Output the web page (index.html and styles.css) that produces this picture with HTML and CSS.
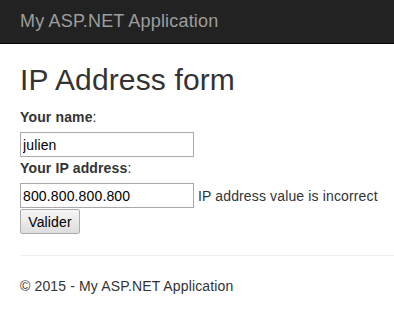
FILE: index.html
```html
<!DOCTYPE html>
<html>
<head>
<meta charset="utf-8">
<title>IP Address form</title>
<link rel="stylesheet" href="styles.css">
</head>
<body>
<div class="navbar">
  <span class="brand">My ASP.NET Application</span>
</div>
<div class="container">
  <h1 class="title">IP Address form</h1>
  <form class="form">
    <div class="label-row"><span class="label">Your name</span>:</div>
    <input class="field" type="text" value="julien">
    <div class="label-row second"><span class="label">Your IP address</span>:</div>
    <div class="field-row">
      <input class="field" type="text" value="800.800.800.800">
      <span class="error">IP address value is incorrect</span>
    </div>
    <button class="btn" type="button">Valider</button>
  </form>
  <hr class="rule">
  <footer class="footer">© 2015 - My ASP.NET Application</footer>
</div>
</body>
</html>
```

FILE: styles.css
```css
html, body {
  margin: 0;
  padding: 0;
  background: #fff;
}
body {
  font-family: "Liberation Sans", Arial, sans-serif;
  font-size: 14px;
  line-height: 20px;
  letter-spacing: 0.14px;
  color: #333;
}
.navbar {
  height: 43px;
  background: #222;
  border-bottom: 1px solid #080808;
  display: flex;
  align-items: center;
  padding-left: 20px;
}
.brand {
  font-size: 18px;
  line-height: 20px;
  letter-spacing: 0.18px;
  color: #9d9d9d;
  margin-top: -2px;
}
.container {
  padding-left: 20px;
}
.title {
  font-size: 30px;
  font-weight: 500;
  line-height: 33px;
  letter-spacing: 0.14px;
  margin: 19px 0 11px;
  color: #333;
}
.form {
  display: flex;
  flex-direction: column;
  align-items: flex-start;
}
.label-row {
  margin-bottom: 5px;
}
.label-row.second {
  margin-top: 1px;
}
.label {
  font-weight: bold;
}
.field {
  box-sizing: border-box;
  width: 174px;
  height: 25px;
  margin: 0;
  padding: 1px 2px;
  border: 1px solid #a9a9a9;
  font-family: "Liberation Sans", Arial, sans-serif;
  font-size: 14px;
  letter-spacing: 0.14px;
  color: #000;
  background: #fff;
}
.field-row {
  display: flex;
  align-items: center;
  gap: 4px;
}
.error {
  color: #333;
}
.btn {
  margin-top: 1px;
  box-sizing: border-box;
  width: 60px;
  height: 25px;
  padding: 0;
  border: 1px solid #adadad;
  border-radius: 2px;
  background: linear-gradient(#f6f6f6, #dedede);
  font-family: "Liberation Sans", Arial, sans-serif;
  font-size: 14px;
  letter-spacing: 0.14px;
  color: #000;
}
.rule {
  margin: 21px 0 0;
  border: 0;
  border-top: 1px solid #eee;
  height: 0;
}
.footer {
  margin-top: 20px;
  line-height: 20px;
}
```
